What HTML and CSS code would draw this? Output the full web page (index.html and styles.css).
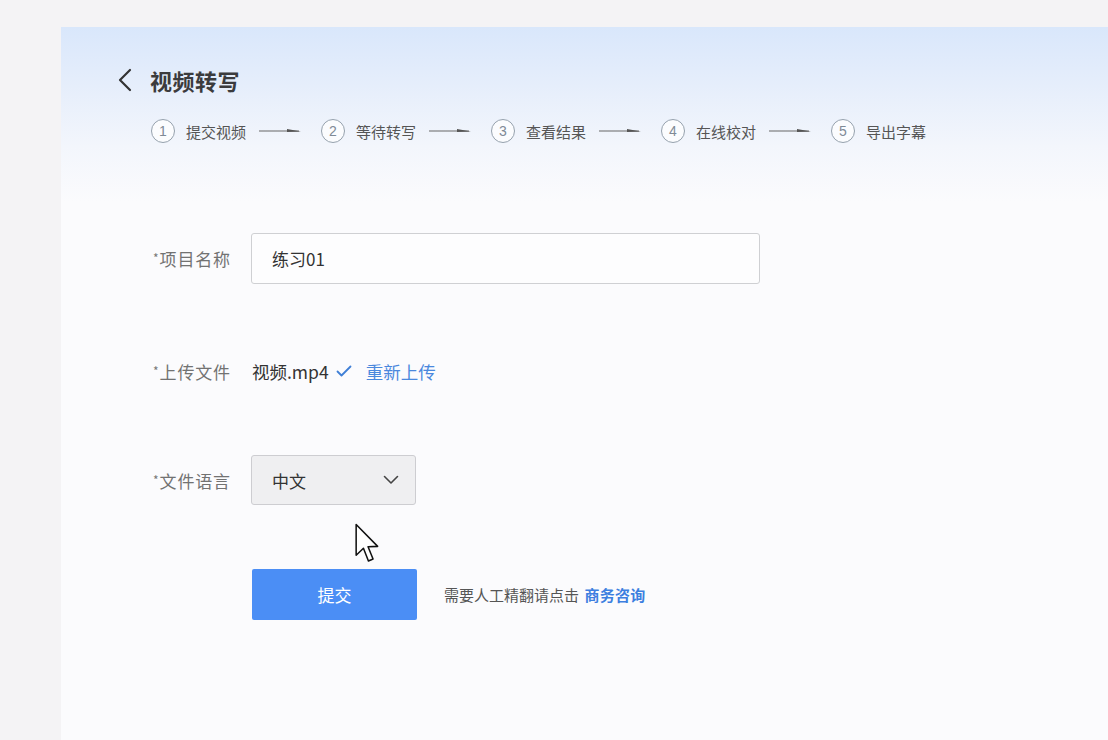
FILE: index.html
```html
<!DOCTYPE html>
<html lang="zh">
<head>
<meta charset="utf-8">
<link rel="stylesheet" href="styles.css">
</head>
<body>
<div class="page">
  <div class="panel">
    <div class="header">
      <div class="title-row">
        <svg class="back" width="14" height="24" viewBox="0 0 14 24"><path d="M12 2 L2 12 L12 22" fill="none" stroke="#333" stroke-width="2.2" stroke-linecap="round" stroke-linejoin="round"/></svg>
        <h1 class="title">视频转写</h1>
      </div>
      <div class="steps">
        <div class="step"><span class="num">1</span><span class="step-text">提交视频</span></div>
        <svg class="arrow" width="42" height="8" viewBox="0 0 42 8"><line x1="0" y1="4" x2="40" y2="4" stroke="#666" stroke-width="1.2"/><polygon points="28,2 42,4.6 28,5" fill="#555"/></svg>
        <div class="step"><span class="num">2</span><span class="step-text">等待转写</span></div>
        <svg class="arrow" width="42" height="8" viewBox="0 0 42 8"><line x1="0" y1="4" x2="40" y2="4" stroke="#666" stroke-width="1.2"/><polygon points="28,2 42,4.6 28,5" fill="#555"/></svg>
        <div class="step"><span class="num">3</span><span class="step-text">查看结果</span></div>
        <svg class="arrow" width="42" height="8" viewBox="0 0 42 8"><line x1="0" y1="4" x2="40" y2="4" stroke="#666" stroke-width="1.2"/><polygon points="28,2 42,4.6 28,5" fill="#555"/></svg>
        <div class="step"><span class="num">4</span><span class="step-text">在线校对</span></div>
        <svg class="arrow" width="42" height="8" viewBox="0 0 42 8"><line x1="0" y1="4" x2="40" y2="4" stroke="#666" stroke-width="1.2"/><polygon points="28,2 42,4.6 28,5" fill="#555"/></svg>
        <div class="step"><span class="num">5</span><span class="step-text">导出字幕</span></div>
      </div>
    </div>

    <div class="form">
      <div class="row row-name">
        <label class="label"><span class="req">*</span>项目名称</label>
        <div class="input">练习01</div>
      </div>
      <div class="row row-file">
        <label class="label"><span class="req">*</span>上传文件</label>
        <span class="file">视频.mp4</span>
        <svg class="check" width="16" height="12" viewBox="0 0 16 12"><path d="M1.5 6.5 L5.5 10.5 L14.5 1.5" fill="none" stroke="#3f7fd6" stroke-width="1.8" stroke-linecap="round" stroke-linejoin="round"/></svg>
        <a class="link">重新上传</a>
      </div>
      <div class="row row-lang">
        <label class="label"><span class="req">*</span>文件语言</label>
        <div class="select">
          <span>中文</span>
          <svg width="16" height="10" viewBox="0 0 16 10"><path d="M1.5 1.5 L8 8 L14.5 1.5" fill="none" stroke="#444" stroke-width="1.6" stroke-linecap="round" stroke-linejoin="round"/></svg>
        </div>
        <svg class="cursor" width="24" height="41" viewBox="0 0 12.5 21"><path d="M0.6 0.6 L0.6 16.6 L4.4 13 L7 19.6 L9.4 18.6 L6.8 12.2 L11.8 12 Z" fill="#fff" stroke="#111" stroke-width="0.8" stroke-linejoin="round"/></svg>
      </div>
      <div class="row row-submit">
        <button class="submit">提交</button>
        <span class="hint">需要人工精翻请点击 <a class="hint-link">商务咨询</a></span>
      </div>
    </div>
  </div>
</div>
</body>
</html>
```

FILE: styles.css
```css
* { box-sizing: border-box; }
html, body { margin: 0; padding: 0; }
body {
  background: #f4f3f5;
  font-family: "Noto Sans CJK SC", "Noto Sans", sans-serif;
  color: #333;
  width: 1108px;
  height: 740px;
  overflow: hidden;
}
.page {
  padding: 27px 0 0 61px;
  height: 740px;
}
.panel {
  height: 713px;
  background: linear-gradient(to bottom, #d9e7fb 0px, #e6eefb 60px, #f3f6fc 120px, #fbfbfd 175px, #fbfbfd 100%);
  display: flex;
  flex-direction: column;
}
.header {
  padding: 38px 0 0 57px;
}
.title-row {
  display: flex;
  align-items: center;
  height: 30px;
}
.back { margin-right: 18px; }
.title {
  margin: 0;
  font-size: 22px;
  font-weight: 700;
  color: #3b3b3d;
  line-height: 30px;
  letter-spacing: 0.5px;
}
.steps {
  display: flex;
  align-items: center;
  margin: 24px 0 0 33px;
  height: 24px;
}
.step {
  display: flex;
  align-items: center;
}
.num {
  width: 24px;
  height: 24px;
  border: 1.4px solid #95a1ad;
  border-radius: 50%;
  display: flex;
  align-items: center;
  justify-content: center;
  font-family: "Liberation Sans", sans-serif;
  font-size: 14px;
  color: #7f8a96;
  background: #fbfcfe;
}
.step-text {
  margin-left: 11px;
  font-size: 15px;
  color: #555;
  width: 60px;
  white-space: nowrap;
}
.arrow {
  margin: 0 20px 0 13px;
}
.form {
  padding-left: 92px;
  margin-top: 90px;
}
.row {
  display: flex;
  align-items: center;
}
.label {
  width: 98px;
  font-size: 17px;
  letter-spacing: 0.8px;
  color: #727272;
  white-space: nowrap;
}
.req {
  font-size: 12px;
  color: #777;
  vertical-align: 3px;
  margin-right: 1px;
  letter-spacing: 0;
}
.row-name { height: 51px; }
.input {
  width: 509px;
  height: 51px;
  border: 1px solid #cfd0d3;
  border-radius: 3px;
  background: #fdfdfe;
  padding-left: 20px;
  display: flex;
  align-items: center;
  font-size: 17px;
  color: #333;
}
.row-file {
  height: 24px;
  margin-top: 75px;
}
.file {
  margin-left: 1px;
  font-size: 17.5px;
  color: #333;
}
.check { margin-left: 7px; }
.link {
  margin-left: 14px;
  font-size: 17.5px;
  color: #4a88dd;
}
.row-lang {
  height: 50px;
  margin-top: 72px;
  position: relative;
}
.select {
  width: 165px;
  height: 50px;
  border: 1px solid #cdcdd1;
  border-radius: 3px;
  background: #efeff1;
  display: flex;
  align-items: center;
  justify-content: space-between;
  padding: 0 16px 0 20px;
  font-size: 17px;
  color: #333;
}
.cursor {
  position: absolute;
  left: 202px;
  top: 68px;
}
.row-submit {
  margin-top: 64px;
  padding-left: 99px;
  height: 51px;
}
.submit {
  width: 165px;
  height: 51px;
  border: none;
  border-radius: 2px;
  background: #4b8ef5;
  color: #fff;
  font-family: "Noto Sans CJK SC", sans-serif;
  font-size: 17px;
  padding: 0;
}
.hint {
  margin-left: 27px;
  font-size: 15px;
  color: #555;
}
.hint-link {
  margin-left: 2px;
  color: #3d7fe0;
  font-weight: 700;
  letter-spacing: 0.3px;
}
```
